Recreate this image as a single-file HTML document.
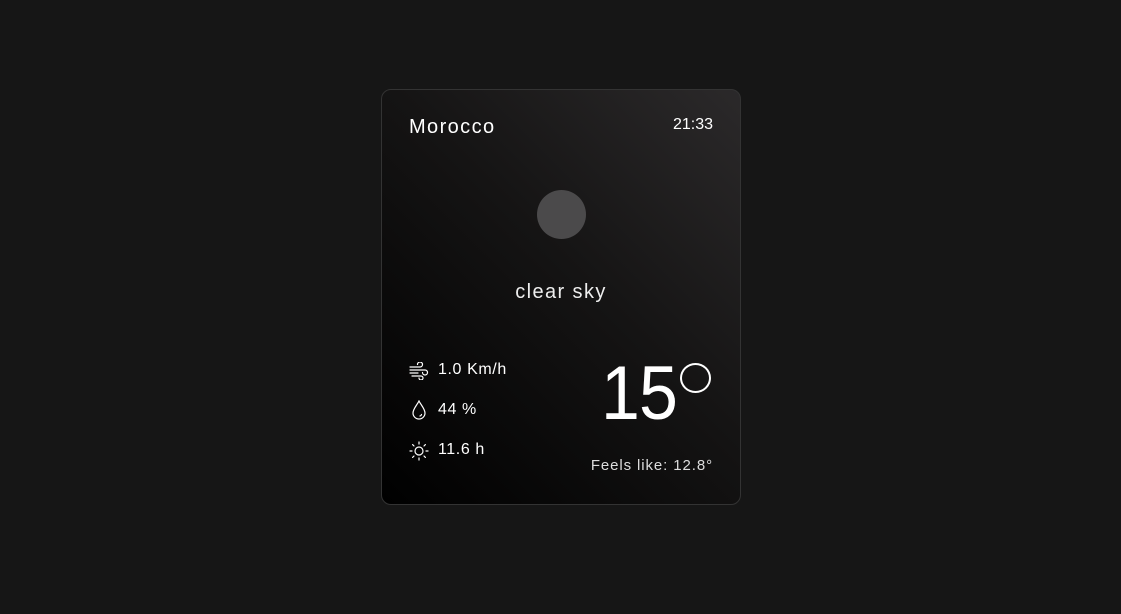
<!DOCTYPE html>
<html><head><style>
html,body{margin:0;width:1121px;height:614px;background:#161616;overflow:hidden;font-family:"Liberation Sans",sans-serif;color:#fff}
.card{position:absolute;left:381px;top:89px;width:358px;height:414px;border:1px solid #333;border-radius:10px;background:linear-gradient(225deg,#2b292a 0%,#151414 45%,#000 100%);box-sizing:content-box}
.t{position:absolute;white-space:nowrap;line-height:1}
.ic{position:absolute;left:27px}
</style></head><body>
<div class="card">
<div class="t" style="left:27px;top:27px;font-size:20px;letter-spacing:1.4px">Morocco</div>
<div class="t" style="right:27px;top:27px;font-size:16px">21:33</div>
<div style="position:absolute;left:155px;top:100px;width:49px;height:49px;border-radius:50%;background:#4b4a4b"></div>
<div class="t" style="left:0;width:358px;text-align:center;top:192px;font-size:20px;letter-spacing:1.4px;color:#eee">clear sky</div>
<svg class="ic" style="top:272px" width="20" height="18" viewBox="0 0 20 18" fill="none" stroke="#fff" stroke-width="1.2" stroke-linecap="round"><path d="M1 5h10a2.5 2.5 0 1 0-2.5-2.5"/><path d="M1 8h15a2.5 2.5 0 1 1-2.5 2.5"/><path d="M1 11h8"/><path d="M3 14h9a2 2 0 1 1-2 2"/></svg>
<svg class="ic" style="top:310px;left:29px" width="16" height="20" viewBox="0 0 16 20" fill="none" stroke="#fff" stroke-width="1.2"><path d="M8 1C6 5 2 9 2 13a6 6 0 0 0 12 0C14 9 10 5 8 1z"/><path d="M10.5 14.5a2 2 0 0 1-1.5 1.5" stroke-linecap="round"/></svg>
<svg class="ic" style="top:351px" width="20" height="20" viewBox="0 0 20 20" fill="none" stroke="#fff" stroke-width="1.2" stroke-linecap="round"><circle cx="10" cy="10" r="4"/><path d="M10 1v2M10 17v2M1 10h2M17 10h2M3.6 3.6l1.4 1.4M15 15l1.4 1.4M3.6 16.4L5 15M15 5l1.4-1.4"/></svg>
<div class="t" style="left:56px;top:272px;font-size:16px;letter-spacing:0.6px">1.0 Km/h</div>
<div class="t" style="left:56px;top:312px;font-size:16px;letter-spacing:0.6px">44 %</div>
<div class="t" style="left:56px;top:352px;font-size:16px;letter-spacing:0.6px">11.6 h</div>
<div class="t" style="left:219px;top:266px;font-size:76px;font-weight:300;transform:scaleX(0.92);transform-origin:left top;letter-spacing:-1px">15</div>
<div style="position:absolute;left:298px;top:273px;width:27px;height:26px;border:2.5px solid #fff;border-radius:50%"></div>
<div class="t" style="right:27px;top:368px;font-size:15px;color:#ddd;letter-spacing:0.9px">Feels like: 12.8°</div>
</div>
</body></html>
